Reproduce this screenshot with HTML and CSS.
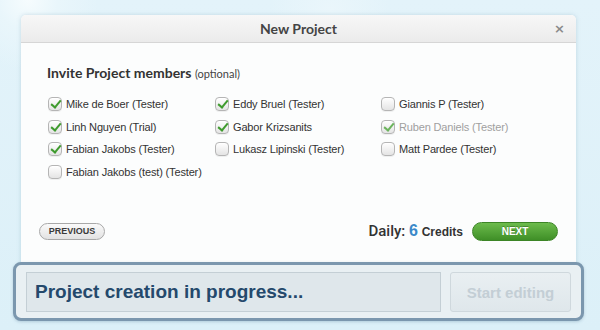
FILE: index.html
```html
<!DOCTYPE html>
<html>
<head>
<meta charset="utf-8">
<link rel="stylesheet" href="styles.css">
</head>
<body>
<div class="page">
  <div class="dialog">
    <div class="dialog-header">
      <span class="title">New Project</span>
      <span class="close">×</span>
    </div>
    <div class="dialog-body">
      <h2 class="section-title">Invite Project members <small>(optional)</small></h2>
      <div class="members">
        <label class="member"><span class="cb checked"></span>Mike de Boer (Tester)</label>
        <label class="member"><span class="cb checked"></span>Eddy Bruel (Tester)</label>
        <label class="member"><span class="cb"></span>Giannis P (Tester)</label>
        <label class="member"><span class="cb checked"></span>Linh Nguyen (Trial)</label>
        <label class="member"><span class="cb checked"></span>Gabor Krizsanits</label>
        <label class="member disabled"><span class="cb checked"></span>Ruben Daniels (Tester)</label>
        <label class="member"><span class="cb checked"></span>Fabian Jakobs (Tester)</label>
        <label class="member"><span class="cb"></span>Lukasz Lipinski (Tester)</label>
        <label class="member"><span class="cb"></span>Matt Pardee (Tester)</label>
        <label class="member"><span class="cb"></span>Fabian Jakobs (test) (Tester)</label>
      </div>
      <div class="dialog-footer">
        <button class="btn-prev">PREVIOUS</button>
        <div class="footer-right">
          <span class="daily">Daily: <b class="count">6</b> <b class="credits">Credits</b></span>
          <button class="btn-next">NEXT</button>
        </div>
      </div>
    </div>
  </div>
  <div class="progress">
    <div class="progress-field">Project creation in progress...</div>
    <button class="btn-start" disabled>Start editing</button>
  </div>
</div>
</body>
</html>
```

FILE: styles.css
```css
* { box-sizing: border-box; }
html, body { margin: 0; padding: 0; }
body {
  width: 600px;
  height: 330px;
  overflow: hidden;
  background: radial-gradient(circle at 28px 0px, #f6fcfe 0, #e9f6fb 30px, transparent 70px),
              radial-gradient(circle at 330px 10px, #eaf6fb 0, transparent 60px),
              linear-gradient(180deg, #e3f3fa 0%, #dcf0f8 100%);
  font-family: "Liberation Sans", Arial, sans-serif;
}
.page {
  padding-top: 15px;
}
.dialog {
  margin-left: 21px;
  width: 555px;
  height: 258px;
  background: #fcfdfd;
  border-radius: 5px 5px 0 0;
  box-shadow: 0 0 4px rgba(120, 160, 180, 0.35);
  display: flex;
  flex-direction: column;
}
.dialog-header {
  height: 28px;
  border-radius: 5px 5px 0 0;
  background: linear-gradient(180deg, #f7f7f7, #ebebeb);
  border-bottom: 1px solid #d6d6d6;
  display: flex;
  align-items: center;
  justify-content: center;
  position: relative;
}
.title {
  font-family: "Lato", "Open Sans", sans-serif;
  font-weight: 700;
  font-size: 14px;
  color: #444;
}
.close {
  position: absolute;
  right: 11px;
  top: 6px;
  font-family: "DejaVu Sans", sans-serif;
  font-size: 13px;
  font-weight: bold;
  color: #8a8a8a;
}
.dialog-body {
  flex: 1;
  padding: 21px 18px 0 26px;
  display: flex;
  flex-direction: column;
}
.section-title {
  margin: 0 0 16px 0;
  font-family: "Lato", "Open Sans", sans-serif;
  font-weight: 700;
  font-size: 14px;
  color: #333;
}
.section-title small {
  font-weight: 400;
  font-size: 11px;
  color: #444;
}
.members {
  display: grid;
  grid-template-columns: 167px 166px 167px;
  row-gap: 8.5px;
}
.member {
  display: flex;
  align-items: center;
  gap: 4px;
  font-size: 11px;
  letter-spacing: -0.15px;
  color: #333;
  height: 14px;
  white-space: nowrap;
  margin-left: 1px;
}
.member.disabled { color: #a0a0a0; }
.cb {
  width: 14px;
  height: 14px;
  border-radius: 4px;
  border: 1px solid #b5b5b5;
  background: linear-gradient(180deg, #ffffff, #e4e4e4);
  box-shadow: inset 0 1px 0 #fff, 0 1px 0 rgba(0,0,0,0.05);
  position: relative;
  flex: none;
}
.cb.checked::after {
  content: "";
  position: absolute;
  left: 3.5px;
  top: 0px;
  width: 4px;
  height: 8px;
  border-right: 2px solid #3f9b2e;
  border-bottom: 2px solid #3f9b2e;
  transform: rotate(40deg);
}
.member.disabled .cb.checked::after { border-color: #6cb45d; }
.dialog-footer {
  margin-top: 43px;
  display: flex;
  align-items: center;
  justify-content: space-between;
  margin-left: -8px;
}
.btn-prev {
  height: 17px;
  width: 66px;
  border-radius: 9px;
  border: 1px solid #a8a8a8;
  background: linear-gradient(180deg, #fafafa, #e2e2e2);
  font-family: "Liberation Sans", Arial, sans-serif;
  font-weight: bold;
  font-size: 9px;
  color: #3a3a3a;
  padding: 0;
}
.footer-right {
  display: flex;
  align-items: center;
  gap: 9px;
}
.daily {
  font-family: "Roboto", "Liberation Sans", sans-serif;
  font-weight: 500;
  font-size: 15px;
  color: #333;
}
.count { font-family: "Liberation Sans", Arial, sans-serif; color: #3a89c9; font-size: 16px; font-weight: bold; }
.credits { font-family: "Liberation Sans", Arial, sans-serif; font-size: 12px; color: #333; font-weight: bold; }
.btn-next {
  width: 86px;
  height: 19px;
  border-radius: 10px;
  border: 1px solid #3c8526;
  background: linear-gradient(180deg, #6cbb4c, #3f8f27);
  color: #fff;
  font-family: "Liberation Sans", Arial, sans-serif;
  font-weight: bold;
  font-size: 10px;
  padding: 0;
  text-shadow: 0 -1px 0 rgba(0, 0, 0, 0.25);
}
.progress {
  position: relative;
  margin-top: -11px;
  margin-left: 13px;
  width: 571px;
  height: 59px;
  border: 3px solid #7b97ae;
  border-radius: 8px;
  background: #e9f0f3;
  padding: 7px 10px;
  display: flex;
  gap: 9px;
  box-shadow: 0 1px 3px rgba(80, 120, 150, 0.3);
}
.progress-field {
  flex: 1;
  height: 40px;
  border: 1px solid #c4cfd5;
  background: #dfe7eb;
  display: flex;
  align-items: center;
  padding-left: 8px;
  font-weight: bold;
  font-size: 19px;
  color: #24496c;
}
.btn-start {
  width: 121px;
  height: 40px;
  border: 1px solid #cfd8dd;
  border-radius: 3px;
  background: linear-gradient(180deg, #e9eff2, #dfe7eb);
  color: #c3ced5;
  font-family: "Liberation Sans", Arial, sans-serif;
  font-weight: bold;
  font-size: 15px;
  padding: 0;
}
```
